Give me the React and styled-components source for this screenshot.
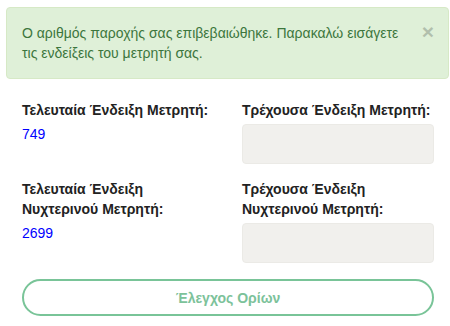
import styled, { createGlobalStyle } from 'styled-components';

const GlobalStyle = createGlobalStyle`
  body {
    margin: 0;
    background: #ffffff;
    font-family: 'Liberation Sans', Arial, sans-serif;
    font-size: 14px;
    line-height: 20px;
    color: #333333;
  }
`;

const Page = styled.div`
  padding: 7px 1px 0 6px;
`;

const Alert = styled.div`
  position: relative;
  padding: 15px 35px 15px 15px;
  background: #dff0d8;
  border: 1px solid #d6e9c6;
  border-radius: 4px;
  color: #3c763d;
  font-size: 14px;
  line-height: 20px;
`;

const Close = styled.button`
  position: absolute;
  top: 13px;
  right: 14px;
  padding: 0;
  border: 0;
  background: transparent;
  font-family: 'Liberation Sans', Arial, sans-serif;
  font-size: 21px;
  font-weight: bold;
  line-height: 1;
  color: #000000;
  opacity: 0.2;
  cursor: pointer;
`;

const Form = styled.div`
  padding: 21px 15px 0 16px;
  display: grid;
  gap: 15px;
`;

const Row = styled.div`
  display: grid;
  grid-template-columns: 1fr 1fr;
  column-gap: 28px;
`;

const Field = styled.div`
  display: flex;
  flex-direction: column;
  gap: 4px;
`;

const Label = styled.label`
  font-size: 14px;
  font-weight: bold;
  line-height: 20px;
  color: #222222;
`;

const Value = styled.span`
  font-size: 14px;
  line-height: 20px;
  color: #0000ff;
`;

const Input = styled.input`
  box-sizing: border-box;
  width: 100%;
  height: 40px;
  background: #f1f0ed;
  border: 1px solid #ebeae6;
  border-radius: 4px;
  outline: none;
`;

const Button = styled.button`
  box-sizing: border-box;
  width: 100%;
  height: 37px;
  margin-top: 1px;
  background: #ffffff;
  border: 2px solid #79c498;
  border-radius: 20px;
  font-family: 'Liberation Sans', Arial, sans-serif;
  font-size: 14px;
  font-weight: bold;
  color: #7cc29a;
  cursor: pointer;
`;

const fields = [
  { last: 'Τελευταία Ένδειξη Μετρητή:', current: 'Τρέχουσα Ένδειξη Μετρητή:', value: 749 },
  {
    last: 'Τελευταία Ένδειξη Νυχτερινού Μετρητή:',
    current: 'Τρέχουσα Ένδειξη Νυχτερινού Μετρητή:',
    value: 2699,
  },
];

export default function App() {
  return (
    <>
      <GlobalStyle />
      <Page>
        <Alert>
          Ο αριθμός παροχής σας επιβεβαιώθηκε. Παρακαλώ εισάγετε τις ενδείξεις του μετρητή σας.
          <Close aria-label="close">×</Close>
        </Alert>
        <Form>
          {fields.map((f) => (
            <Row key={f.value}>
              <Field>
                <Label>{f.last}</Label>
                <Value>{f.value}</Value>
              </Field>
              <Field>
                <Label>{f.current}</Label>
                <Input type="text" />
              </Field>
            </Row>
          ))}
          <Button>Έλεγχος Ορίων</Button>
        </Form>
      </Page>
    </>
  );
}
